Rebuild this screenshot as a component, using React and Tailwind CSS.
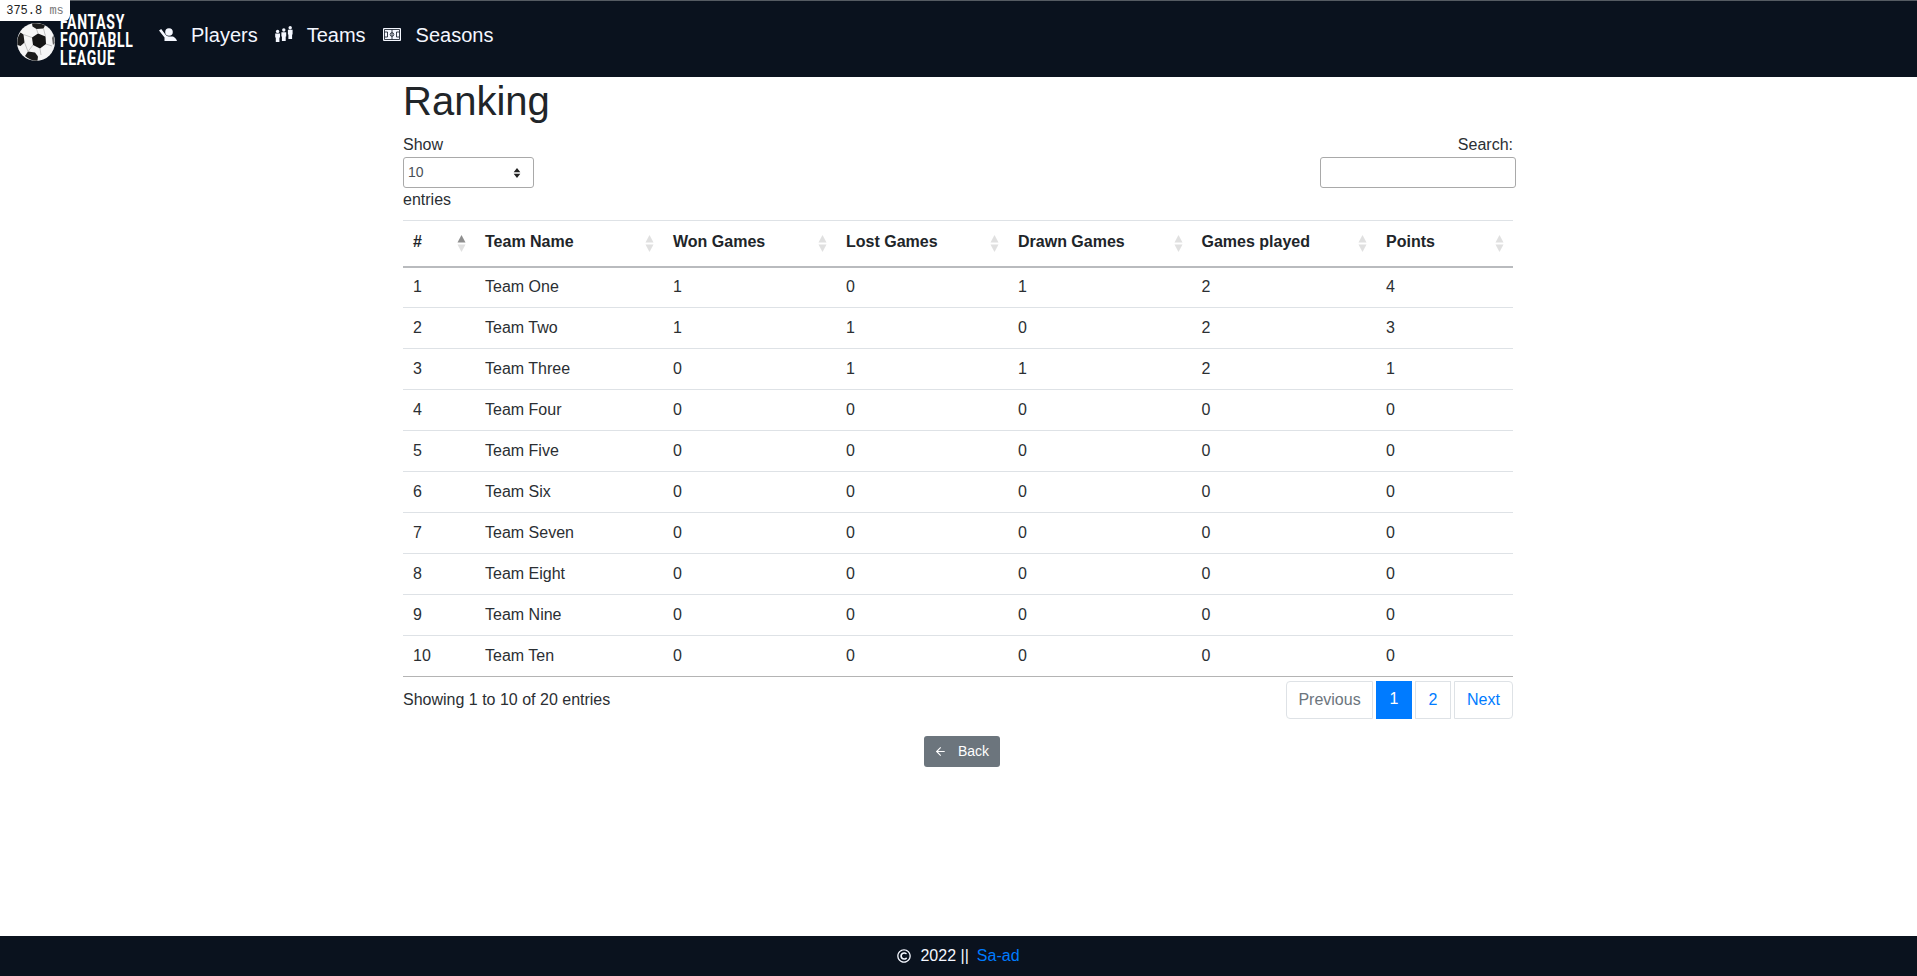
import React from 'react';
import { ArrowLeft } from 'lucide-react';
import { FaRegCopyright } from 'react-icons/fa';

const columns = [
  { label: '#', width: 'w-[72px]' },
  { label: 'Team Name', width: 'w-[188px]' },
  { label: 'Won Games', width: 'w-[173px]' },
  { label: 'Lost Games', width: 'w-[172px]' },
  { label: 'Drawn Games', width: 'w-[183.5px]' },
  { label: 'Games played', width: 'w-[184.5px]' },
  { label: 'Points', width: 'w-[137px]' },
];

const rows = [
  [1, 'Team One', 1, 0, 1, 2, 4],
  [2, 'Team Two', 1, 1, 0, 2, 3],
  [3, 'Team Three', 0, 1, 1, 2, 1],
  [4, 'Team Four', 0, 0, 0, 0, 0],
  [5, 'Team Five', 0, 0, 0, 0, 0],
  [6, 'Team Six', 0, 0, 0, 0, 0],
  [7, 'Team Seven', 0, 0, 0, 0, 0],
  [8, 'Team Eight', 0, 0, 0, 0, 0],
  [9, 'Team Nine', 0, 0, 0, 0, 0],
  [10, 'Team Ten', 0, 0, 0, 0, 0],
];

const Ball = () => (
  <svg viewBox="0 0 38 38" className="w-[38px] h-[38px] shrink-0 mt-[10px]">
    <circle cx="19" cy="19" r="19" fill="#f5f5f5" />
    <path d="M27 34 A19 19 0 0 0 36 27 A19 19 0 0 1 27 34 Z" fill="#bbb" />
    {/* centre patch */}
    <path d="M21 10.5 L28.5 13.5 L29 21 L23 25.5 L16 22 L15 14.5 Z" fill="#141414" />
    {/* top patch */}
    <path d="M15 0.5 C19 -0.2 24 0 28 2.5 L26.5 5.5 L19.5 6 L15.5 3.5 Z" fill="#1c1c1c" />
    {/* left patch */}
    <path d="M3.5 9.5 L6.5 11.5 L7.5 19.5 L3.5 23 L0.5 22 C-0.2 17 1 13 3.5 9.5 Z" fill="#1c1c1c" />
    {/* bottom patch */}
    <path d="M8 33 L11 28.5 L18 29.5 L21 33.5 L20.5 37.8 C16 38.2 12 36.5 8 33 Z" fill="#1c1c1c" />
    <path d="M36.5 12 L37.8 20 L36 22 L35 15 Z" fill="#666" />
    <path d="M19.5 6 L21 10.5 M26.5 5.5 L28.5 13.5 M6.5 11.5 L15 14.5 M7.5 19.5 L11 28.5 M16 22 L11 28.5 M23 25.5 L24 32 M29 21 L35 23" stroke="#aaa" strokeWidth="0.7" fill="none" />
  </svg>
);

const PlayerIcon = () => (
  <svg viewBox="0 0 18 13" className="w-[18px] h-[13px] -mt-px fill-[#f4f7ff]">
    <circle cx="10" cy="4" r="3.8" />
    <path d="M0 2.6 L2.2 1 L6.2 6.2 C7 7.4 8 8.3 10 8.5 L14 8.5 C15.6 9 17.5 11 18 13 L5.5 13 L5.5 9.5 Z" />
  </svg>
);

const TeamIcon = () => (
  <svg viewBox="0 0 18 16" className="w-[18px] h-[16px] -mt-[2px] fill-[#f4f7ff]">
    <circle cx="2.6" cy="5.4" r="1.7" />
    <path d="M0.2 7.6 H5 V11.6 H4.4 V16 H0.8 V11.6 H0.2 Z" />
    <circle cx="8.8" cy="4" r="1.7" />
    <path d="M6.4 6.2 H11.2 V10.6 H10.7 V15 H6.9 V10.6 H6.4 Z" />
    <circle cx="15.2" cy="1.7" r="1.7" />
    <path d="M12.9 3.8 H17.6 V8.6 H17.1 V13 H13.4 V8.6 H12.9 Z" />
  </svg>
);

const FieldIcon = () => (
  <svg viewBox="0 0 18 13" className="w-[18px] h-[13px] -mt-px">
    <rect x="0" y="0" width="18" height="13" rx="1" fill="#f4f7ff" />
    <path d="M1.5 1.5 H16.5 V11.5 H1.5 Z M9 1.5 V11.5 M1.5 4 H4.5 V9 H1.5 M16.5 4 H13.5 V9 H16.5" stroke="#0a121e" strokeWidth="0.8" fill="none" />
    <circle cx="9" cy="6.5" r="1.8" stroke="#0a121e" strokeWidth="0.8" fill="none" />
  </svg>
);

const SortArrows = ({ active }) => (
  <svg viewBox="0 0 8 17" className="absolute right-[9px] top-[14px] w-[9px] h-[17px]">
    <path d="M4 0 L8 7.5 H0 Z" fill={active ? '#8e8e8e' : '#e0e0e0'} />
    <path d="M4 17 L8 9.5 H0 Z" fill="#e0e0e0" />
  </svg>
);

const App = () => {
  return (
    <div className="min-h-[976px] flex flex-col bg-white text-[#2b2f33] text-base font-['Liberation_Sans',Arial,sans-serif]">
      <div className="absolute top-0 left-0 w-[70px] h-[21px] bg-white rounded-br-md flex items-center justify-center font-['Liberation_Mono',monospace] text-[12px] text-[#222] whitespace-pre">
        375.8 <span className="text-[#777]">ms</span>
      </div>

      {/* Header */}
      <header className="h-[77px] shrink-0 bg-[#0a121e] border-t border-[#555b62] flex items-start pt-[12px] pl-[17px]">
        <div className="flex items-start w-[142px]">
          <Ball />
          <div className="ml-[5px] font-['Roboto',sans-serif] font-bold text-white text-[20px] leading-[18px] tracking-[1px] whitespace-nowrap origin-left scale-x-[0.7]">
            <div>FANTASY</div>
            <div>FOOTABLL</div>
            <div>LEAGUE</div>
          </div>
        </div>
        <nav className="flex items-center text-[20px] text-[#f4f7ff] h-[44px]">
          <a className="flex items-center"><PlayerIcon /><span className="ml-[14px]">Players</span></a>
          <a className="flex items-center ml-[17px]"><TeamIcon /><span className="ml-[14px]">Teams</span></a>
          <a className="flex items-center ml-[17px]"><FieldIcon /><span className="ml-[15px]">Seasons</span></a>
        </nav>
      </header>

      {/* Content */}
      <main className="flex-1 w-[1110px] ml-[403px]">
        <h1 className="text-[40px] leading-[48px] font-normal text-[#212529] mb-2">Ranking</h1>

        <div className="flex justify-between">
          <div>
            <div className="leading-6">Show</div>
            <div className="w-[131px] h-[31px] border border-[#a9a9a9] rounded-[3px] flex items-center justify-between pl-[4px] pr-[12px] text-[14px] text-[#495057]">
              10
              <svg viewBox="0 0 8 12" className="w-[8px] h-[10px] fill-[#222]">
                <path d="M4 0 L8 5 H0 Z M4 12 L8 7 H0 Z" />
              </svg>
            </div>
            <div className="leading-6">entries</div>
          </div>
          <div className="flex flex-col items-end">
            <div className="leading-6">Search:</div>
            <input className="w-[196px] h-[31px] -mr-[3px] border border-[#a9a9a9] rounded-[3px] outline-none" />
          </div>
        </div>

        <table className="w-full table-fixed border-collapse mt-[8px] border-b border-[#b4b4b4]">
          <thead>
            <tr className="h-[46px] border-t border-b-2 border-t-[#dee2e6] border-b-[#b9bbbe] text-[#212529]">
              {columns.map((col, i) => (
                <th key={col.label} className={`${col.width} relative px-[10px] pb-[2px] text-left font-bold`}>
                  {col.label}
                  <SortArrows active={i === 0} />
                </th>
              ))}
            </tr>
          </thead>
          <tbody>
            {rows.map((row, i) => (
              <tr key={row[0]} className={`h-[41px] ${i > 0 ? 'border-t border-[#dee2e6]' : ''}`}>
                {row.map((cell, j) => (
                  <td key={j} className="px-[10px]">{cell}</td>
                ))}
              </tr>
            ))}
          </tbody>
        </table>

        <div className="flex items-center justify-between mt-[4px]">
          <div>Showing 1 to 10 of 20 entries</div>
          <div className="flex gap-[3px] h-[38px] leading-[36px]">
            <span className="w-[87px] text-center border border-[#dee2e6] rounded-l-[4px] text-[#6c757d]">Previous</span>
            <span className="w-[36px] text-center bg-[#007bff] text-white">1</span>
            <span className="w-[36px] text-center border border-[#dee2e6] text-[#007bff]">2</span>
            <span className="w-[59px] text-center border border-[#dee2e6] rounded-r-[4px] text-[#007bff]">Next</span>
          </div>
        </div>

        <div className="flex justify-center mt-[17px] pl-[7px]">
          <a className="w-[76px] h-[31px] bg-[#6c757d] rounded-[3px] text-white text-[14px] flex items-center justify-center">
            <ArrowLeft size={13} />
            <span className="ml-[11px]">Back</span>
          </a>
        </div>
      </main>

      {/* Footer */}
      <footer className="h-[40px] shrink-0 bg-[#0a121e] text-[#f4f7ff] flex items-center justify-center">
        <FaRegCopyright size={14} />
        <span className="ml-[9px]">2022 ||</span>
        <a className="ml-[8px] text-[#007bff]">Sa-ad</a>
      </footer>
    </div>
  );
};

export default App;
